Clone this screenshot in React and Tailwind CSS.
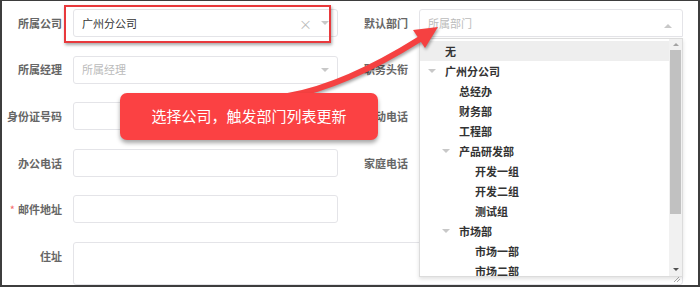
import React from "react";

const DownTri = ({ color = "border-t-[#c8c8c8]" }) => (
  <span className={`inline-block h-0 w-0 border-x-[4px] border-t-[4px] border-x-transparent ${color}`} />
);

const UpTri = ({ color = "border-b-[#c8c8c8]" }) => (
  <span className={`inline-block h-0 w-0 border-x-[4px] border-b-[4px] border-x-transparent ${color}`} />
);

const Label = ({ children, className = "" }) => (
  <div className={`flex h-[28px] items-center justify-end font-bold text-[#666] ${className}`}>{children}</div>
);

const Box = ({ children, className = "" }) => (
  <div className={`flex h-[28px] items-center rounded-[3px] border border-[#e4e4e8] bg-white px-[8px] ${className}`}>
    {children}
  </div>
);

const depts = [
  { name: "无", level: 0, active: true },
  { name: "广州分公司", level: 0, open: true },
  { name: "总经办", level: 1 },
  { name: "财务部", level: 1 },
  { name: "工程部", level: 1 },
  { name: "产品研发部", level: 1, open: true },
  { name: "开发一组", level: 2 },
  { name: "开发二组", level: 2 },
  { name: "测试组", level: 2 },
  { name: "市场部", level: 1, open: true },
  { name: "市场一部", level: 2 },
  { name: "市场二部", level: 2 },
];

const spacer = ["w-[8px]", "w-[22px]", "w-[38px]"];

export default function App() {
  return (
    <div className="relative h-[287px] w-[700px] overflow-hidden border-x-2 border-b-2 border-t border-[#3d3d3d] bg-white font-['Noto_Sans_CJK_SC',sans-serif] text-[11px] text-[#333]">
      <div className="flex flex-col gap-[18.6px] pt-[8px]">
        <div className="flex">
          <Label className="w-[60px]">所属公司</Label>
          <Box className="ml-[11px] w-[265px]">
            <span className="flex-1">广州分公司</span>
            <span className="mr-[9px] text-[13px] leading-none text-[#bbb]">×</span>
            <DownTri />
          </Box>
          <Label className="w-[70px]">默认部门</Label>
          <Box className="ml-[11px] w-[264px] rounded-b-none">
            <span className="flex-1 text-[#bbb]">所属部门</span>
            <span className="mr-[2px]"><UpTri /></span>
          </Box>
        </div>
        <div className="flex">
          <Label className="w-[60px]">所属经理</Label>
          <Box className="ml-[11px] w-[265px]">
            <span className="flex-1 text-[#bbb]">所属经理</span>
            <DownTri />
          </Box>
          <Label className="w-[70px]">职务头衔</Label>
          <Box className="ml-[11px] w-[264px]" />
        </div>
        <div className="flex">
          <Label className="w-[60px]">身份证号码</Label>
          <Box className="ml-[11px] w-[265px]" />
          <Label className="w-[70px]">移动电话</Label>
          <Box className="ml-[11px] w-[264px]" />
        </div>
        <div className="flex">
          <Label className="w-[60px]">办公电话</Label>
          <Box className="ml-[11px] w-[265px]" />
          <Label className="w-[70px]">家庭电话</Label>
          <Box className="ml-[11px] w-[264px]" />
        </div>
        <div className="flex">
          <Label className="w-[60px]">
            <span className="mr-[3px] font-normal text-[#f56c6c]">*</span>邮件地址
          </Label>
          <Box className="ml-[11px] w-[265px]" />
        </div>
        <div className="flex">
          <Label className="w-[60px]">住址</Label>
          <div className="relative ml-[11px] h-[43px] w-[610px] rounded-[3px] border border-[#e4e4e8]">
            <svg className="absolute bottom-[1px] right-[1px]" width="9" height="9" viewBox="0 0 9 9">
              <path d="M8 2 L2 8 M8 5 L5 8" stroke="#aaa" strokeWidth="1" />
            </svg>
          </div>
        </div>
      </div>

      {/* department dropdown */}
      <div className="absolute left-[417px] top-[37px] flex h-[239px] w-[264px] border border-[#dcdcdc] bg-white shadow-[0_2px_4px_rgba(0,0,0,0.12)]">
        <div className="flex-1 overflow-hidden pt-[2px] font-bold text-[#333]">
          {depts.map((d) => (
            <div key={d.name} className={`flex h-[20px] items-center ${d.active ? "bg-[#eee]" : ""}`}>
              <span className={`shrink-0 ${spacer[d.level]}`} />
              <span className="flex w-[17px] shrink-0 items-center">{d.open && <DownTri color="border-t-[#c8c8c8]" />}</span>
              <span>{d.name}</span>
            </div>
          ))}
        </div>
        <div className="flex w-[13px] flex-col bg-[#f1f1f1]">
          <div className="flex h-[11px] items-center justify-center">
            <span className="inline-block h-0 w-0 border-x-[3px] border-b-[3px] border-x-transparent border-b-[#a3a3a3]" />
          </div>
          <div className="mx-[1px] h-[164px] bg-[#c1c1c1]" />
          <div className="flex-1" />
          <div className="flex h-[13px] items-center justify-center">
            <span className="inline-block h-0 w-0 border-x-[3px] border-t-[3px] border-x-transparent border-t-[#505050]" />
          </div>
        </div>
      </div>

      {/* red highlight around company select */}
      <div className="absolute left-[62px] top-[4px] h-[38px] w-[267px] border-2 border-[#e8393c] shadow-[1px_2px_3px_rgba(0,0,0,0.35)]" />

      {/* arrow */}
      <svg
        className="absolute left-[-2px] top-[-1px] drop-shadow-[1px_2px_1.5px_rgba(0,0,0,0.35)]"
        width="700"
        height="287"
        viewBox="0 0 700 287"
      >
        <path d="M288 96 Q345 86 420 39" fill="none" stroke="#f54141" strokeWidth="6" strokeLinecap="round" />
        <polygon points="438,27 425,48 413,30" fill="#f54141" />
      </svg>

      {/* callout */}
      <div className="absolute left-[118px] top-[92px] flex h-[47px] w-[258px] items-center justify-center rounded-[7px] bg-[#fb4143] text-[15px] text-white shadow-[0_3px_4px_rgba(0,0,0,0.35)]">
        选择公司，触发部门列表更新
      </div>
    </div>
  );
}
